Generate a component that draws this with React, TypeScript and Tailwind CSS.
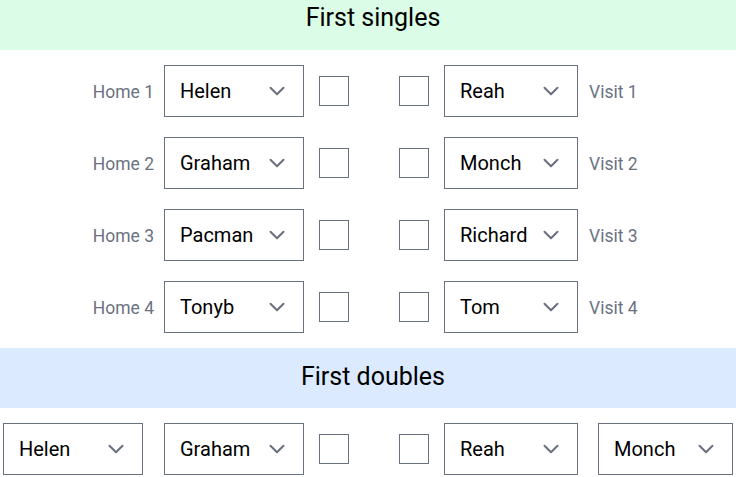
import { ChevronDown } from "lucide-react";

const SINGLES = [
  { home: "Helen", visit: "Reah" },
  { home: "Graham", visit: "Monch" },
  { home: "Pacman", visit: "Richard" },
  { home: "Tonyb", visit: "Tom" }
];

function Picker({ value, width }: { value: string; width: string }) {
  return (
    <div
      className={`flex h-[52px] shrink-0 items-center justify-between border border-gray-500 bg-white pl-[15px] pr-[13px] text-[20px] text-black ${width}`}
    >
      <span>{value}</span>
      <ChevronDown size={26} strokeWidth={1.9} className="text-gray-500" />
    </div>
  );
}

function Box({ className = "" }: { className?: string }) {
  return <div className={`h-[30px] w-[30px] shrink-0 border border-gray-500 bg-white ${className}`} />;
}

export default function App() {
  return (
    <div className="w-[736px] bg-white font-['Roboto',sans-serif] text-black">
      <div className="h-[50px] bg-green-100 pl-[10px] pt-[4px] text-center text-[25px] leading-[28px]">First singles</div>

      <div className="flex flex-col gap-[20px] py-[15px]">
        {SINGLES.map((row, idx) => (
          <div key={row.home} className="flex items-center">
            <div className="mt-[2px] w-[154px] shrink-0 text-right text-[17.5px] text-gray-500">Home {idx + 1}</div>
            <Picker value={row.home} width="ml-[10px] w-[140px]" />
            <Box className="ml-[15px]" />
            <Box className="ml-[50px]" />
            <Picker value={row.visit} width="ml-[15px] w-[134px]" />
            <div className="ml-[11px] mt-[2px] text-[17.5px] text-gray-500">Visit {idx + 1}</div>
          </div>
        ))}
      </div>

      <div className="h-[60px] bg-blue-100 pl-[10px] pt-[15px] text-center text-[25px] leading-[28px]">First doubles</div>

      <div className="flex items-center pt-[15px]">
        <Picker value="Helen" width="ml-[3px] w-[140px]" />
        <Picker value="Graham" width="ml-[21px] w-[140px]" />
        <Box className="ml-[15px]" />
        <Box className="ml-[50px]" />
        <Picker value="Reah" width="ml-[15px] w-[134px]" />
        <Picker value="Monch" width="ml-[20px] w-[135px]" />
      </div>
    </div>
  );
}
